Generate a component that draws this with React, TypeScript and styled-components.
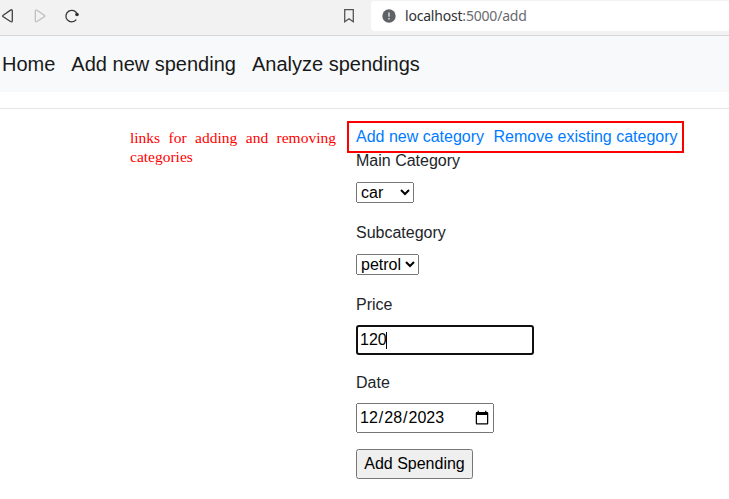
import React from 'react';
import styled, { createGlobalStyle } from 'styled-components';

const GlobalStyle = createGlobalStyle`
  *, *::before, *::after { box-sizing: border-box; }
  body {
    margin: 0;
    overflow: hidden;
    background: #fff;
    color: #212529;
    font: 16px/24px "Liberation Sans", Arial, sans-serif;
  }
`;

const Page = styled.div`
  height: 499px;
  overflow: hidden;
`;

const BrowserBar = styled.header`
  display: flex;
  height: 36px;
  background: #f2f2f2;
  border-bottom: 1px solid #d5d6d8;
`;

const BrowserButtons = styled.div`
  width: 371px;
  height: 31px;
  display: flex;
  flex: none;
`;

const BarIcon = styled.svg<{ $gap?: number }>`
  display: block;
  flex: none;
  width: 16px;
  height: 16px;
  margin-top: 8px;
  margin-left: ${({ $gap = 0 }) => $gap}px;
  fill: none;
`;

const AddressField = styled.div`
  flex: 1;
  height: 31px;
  display: flex;
  align-items: center;
  padding-left: 11px;
  background: #fff;
  border-radius: 4px 0 0 4px;
  box-shadow: inset 0 1px #f2f2f2;
`;

const InfoIcon = styled.svg`
  width: 14px;
  height: 14px;
  margin-right: 9px;
`;

const Address = styled.span`
  font: 14px/20px "Noto Sans", sans-serif;
  letter-spacing: -0.2px;
  color: #6a6b6e;
  white-space: nowrap;
`;

const Host = styled.span`
  color: #303134;
`;

const Nav = styled.nav`
  display: flex;
  align-items: center;
  gap: 16px;
  height: 56px;
  padding-left: 2px;
  background: #f8f9fa;
`;

const NavLink = styled.a`
  font-size: 20px;
  line-height: 30px;
  color: #18191a;
  white-space: nowrap;
`;

const Rule = styled.hr`
  margin: 16px 0;
  border: 0;
  border-top: 1px solid #e5e5e5;
`;

const Content = styled.main`
  display: grid;
  grid-template-columns: 206px 373px;
  column-gap: 20px;
  padding-left: 130px;
`;

const Note = styled.p`
  margin: 3px 0 0;
  font: 15.5px/19px "Liberation Serif", "Times New Roman", serif;
  text-align: justify;
  color: #f00;
`;

const Form = styled.form`
  display: flex;
  flex-direction: column;
  align-items: flex-start;
`;

const CategoryLinks = styled.div`
  position: relative;
  display: flex;
  gap: 9.4px;
  width: 321px;
  height: 24px;
`;

const CategoryLink = styled.a`
  color: #007bff;
  white-space: nowrap;
`;

const Highlight = styled.span`
  position: absolute;
  inset: -4px -7px -4px -9px;
  border: 2px solid #f00;
`;

const Label = styled.label`
  height: 24px;
  margin-bottom: 8px;
`;

const Select = styled.select<{ $width: number }>`
  width: ${({ $width }) => $width}px;
  height: 21px;
  margin: 1px 0 18px;
  font: inherit;
  line-height: normal;
`;

const PriceField = styled.div`
  display: flex;
  align-items: center;
  width: 178px;
  height: 30px;
  margin-bottom: 16px;
  padding-left: 2px;
  border: 2px solid #101010;
  border-radius: 3px;
  color: #000;
`;

const Caret = styled.span`
  width: 1px;
  height: 17px;
  margin-left: -1px;
  background: #000;
`;

const DateField = styled.input`
  width: 138px;
  height: 30px;
  margin: 0 0 16px;
  font: inherit;
`;

const Submit = styled.button`
  width: 117px;
  height: 30px;
  margin: 0;
  padding: 0;
  font: inherit;
  white-space: nowrap;
`;

export default function App() {
  return (
    <Page>
      <GlobalStyle />
      <BrowserBar>
        <BrowserButtons>
          <BarIcon viewBox="0 0 16 16">
            <path d="M3.2 7.2 10.5 2.1Q12.3 1.1 12.3 3.1V12.6Q12.3 14.6 10.5 13.5L3.2 8.8Q2 8 3.2 7.2Z" stroke="#414141" strokeWidth="1.3" />
          </BarIcon>
          <BarIcon viewBox="0 0 16 16" $gap={16}>
            <path d="M12.3 7.2 5 2.3Q3.3 1.4 3.3 3.1V12.6Q3.3 14.4 5 13.4L12.3 8.7Q13.5 8 12.3 7.2Z" stroke="#bdbdbd" strokeWidth="1.2" />
          </BarIcon>
          <BarIcon viewBox="0 0 16 16" $gap={16}>
            <path d="M12.3 11.7A5.8 5.8 0 1 1 13.2 6.2" stroke="#353535" strokeWidth="1.3" />
            <circle cx="13" cy="6.5" r="1.8" fill="#303030" />
          </BarIcon>
          <BarIcon viewBox="0 0 16 16" $gap={261}>
            <path d="M3.7 1.7H12.3V13.8L8 10.7 3.7 13.8Z" stroke="#555" strokeWidth="1.3" />
          </BarIcon>
        </BrowserButtons>
        <AddressField>
          <InfoIcon viewBox="0 0 14 14">
            <circle cx="7" cy="7" r="6.7" fill="#5f6368" />
            <path d="M7 3.5V7.7M7 9V10.5" stroke="#e1e2e3" strokeWidth="1.4" />
          </InfoIcon>
          <Address><Host>localhost</Host>:5000/add</Address>
        </AddressField>
      </BrowserBar>
      <Nav>
        <NavLink>Home</NavLink>
        <NavLink>Add new spending</NavLink>
        <NavLink>Analyze spendings</NavLink>
      </Nav>
      <Rule />
      <Content>
        <Note>links for adding and removing categories</Note>
        <Form>
          <CategoryLinks>
            <CategoryLink>Add new category</CategoryLink>
            <CategoryLink>Remove existing category</CategoryLink>
            <Highlight />
          </CategoryLinks>
          <Label>Main Category</Label>
          <Select $width={58} defaultValue="car"><option>car</option></Select>
          <Label>Subcategory</Label>
          <Select $width={63} defaultValue="petrol"><option>petrol</option></Select>
          <Label>Price</Label>
          <PriceField>120<Caret /></PriceField>
          <Label>Date</Label>
          <DateField type="date" defaultValue="2023-12-28" />
          <Submit type="button">Add Spending</Submit>
        </Form>
      </Content>
    </Page>
  );
}
